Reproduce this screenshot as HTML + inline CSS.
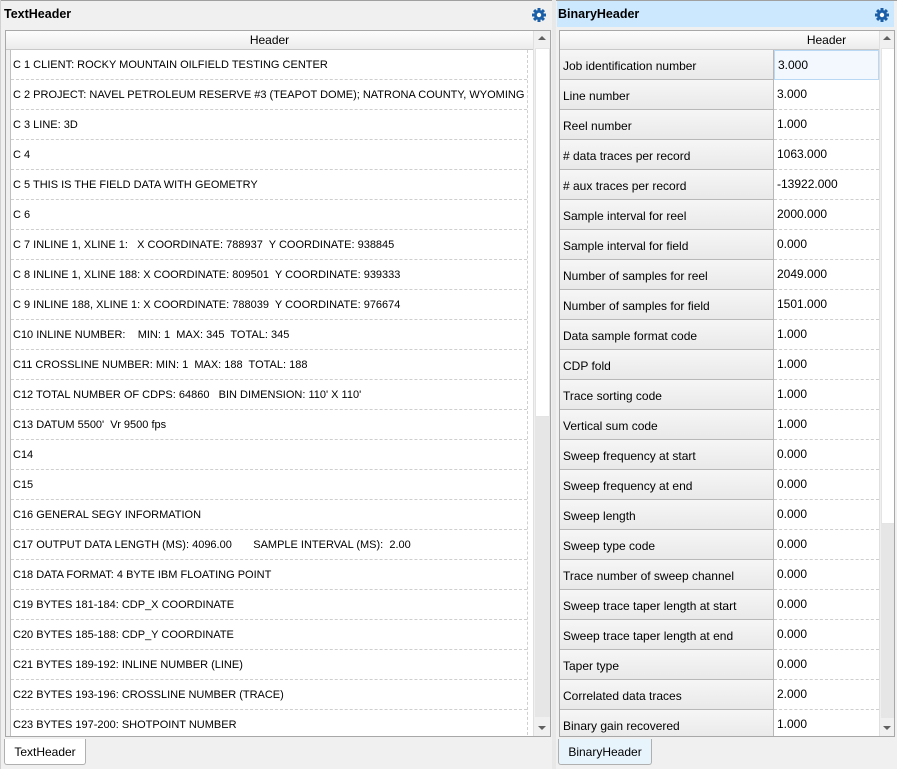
<!DOCTYPE html>
<html><head><style>
*{margin:0;padding:0;box-sizing:border-box}
body{width:897px;height:769px;background:#f0f0f0;font-family:"Liberation Sans",sans-serif;font-size:12px;color:#000;position:relative;overflow:hidden}
.abs{position:absolute}
.title{font-weight:bold;font-size:12.5px}
.gear{width:16px;height:16px}
.row{position:absolute;left:0;height:30px;border-bottom:1px dashed #cfcfcf;white-space:nowrap}
.hdr{background:linear-gradient(#fdfdfd,#ececec);border-bottom:1px solid #c8c8c8;text-align:center;line-height:18px}
.rh{background:linear-gradient(#f6f6f6,#e9e9e9);border-right:1px solid #b8b8b8;border-bottom:1px solid #b8b8b8}
</style></head><body>
<div class="abs" style="left:0;top:0;width:897px;height:1px;background:#a0a0a0"></div>
<div class="abs" style="left:0;top:0;width:1px;height:769px;background:#d0d0d0"></div>
<div class="abs title" style="left:4px;top:7px">TextHeader</div>
<svg class="abs gear" style="left:531px;top:7px" viewBox="0 0 16 16"><g fill="#1a5fa8"><circle cx="8" cy="8" r="5"/><rect x="6.5" y="1" width="3" height="14"/><rect x="1" y="6.5" width="14" height="3"/><rect x="6.5" y="1" width="3" height="14" transform="rotate(45 8 8)"/><rect x="6.5" y="1" width="3" height="14" transform="rotate(-45 8 8)"/></g><circle cx="8" cy="8" r="2.2" fill="#fff"/></svg>
<div class="abs" style="left:5px;top:30px;width:546px;height:707px;border:1px solid #a8a8a8;background:#fff;overflow:hidden">
 <div class="abs hdr" style="left:0;top:0;width:527px;height:19px">Header</div>
 <div class="abs" style="left:0;top:19px;width:5px;height:700px;background:#f0f0f0;border-right:1px solid #c0c0c0"></div>
 <div class="abs" style="left:5px;top:19px;width:516px;font-size:11px" id="L"></div>
 <div class="abs" style="left:521px;top:19px;width:1px;height:700px;border-left:1px dashed #cfcfcf"></div>
 <div class="abs" style="left:527px;top:0;width:17px;height:707px;background:#f0f0f0;border-left:1px solid #e0e0e0">
  <div class="abs" style="left:1px;top:17px;width:15px;height:369px;background:#fff;border:1px solid #e4e4e4"></div>
  <div class="abs" style="left:1px;top:386px;width:15px;height:300px;background:#e6e6e6"></div>
  <div class="abs" style="left:4px;top:5px;width:0;height:0;border-left:4px solid transparent;border-right:4px solid transparent;border-bottom:4px solid #606060"></div>
  <div class="abs" style="left:4px;top:695px;width:0;height:0;border-left:4px solid transparent;border-right:4px solid transparent;border-top:4px solid #606060"></div>
 </div>
</div>
<div class="abs" style="left:4px;top:739px;width:82px;height:26px;background:#fff;border:1px solid #b0b0b0;border-top:none;border-radius:0 0 3px 3px;text-align:center;line-height:26px">TextHeader</div>
<div class="abs" style="left:552px;top:0;width:4px;height:769px;background:#e8e8e8"></div>
<div class="abs" style="left:557px;top:1px;width:337px;height:26px;background:#cce8ff"></div>
<div class="abs title" style="left:558px;top:7px">BinaryHeader</div>
<svg class="abs gear" style="left:874px;top:7px" viewBox="0 0 16 16"><g fill="#1a5fa8"><circle cx="8" cy="8" r="5"/><rect x="6.5" y="1" width="3" height="14"/><rect x="1" y="6.5" width="14" height="3"/><rect x="6.5" y="1" width="3" height="14" transform="rotate(45 8 8)"/><rect x="6.5" y="1" width="3" height="14" transform="rotate(-45 8 8)"/></g><circle cx="8" cy="8" r="2.2" fill="#fff"/></svg>
<div class="abs" style="left:559px;top:30px;width:336px;height:707px;border:1px solid #a8a8a8;background:#fff;overflow:hidden">
 <div class="abs hdr" style="left:0;top:0;width:319px;height:19px;padding-left:214px">Header</div>
 <div class="abs" style="left:0;top:19px;width:319px" id="R"></div>
 <div class="abs" style="left:319px;top:0;width:16px;height:707px;background:#f0f0f0;border-left:1px solid #e0e0e0">
  <div class="abs" style="left:1px;top:17px;width:14px;height:476px;background:#fff;border:1px solid #e4e4e4"></div>
  <div class="abs" style="left:1px;top:493px;width:14px;height:194px;background:#e6e6e6"></div>
  <div class="abs" style="left:3px;top:5px;width:0;height:0;border-left:4px solid transparent;border-right:4px solid transparent;border-bottom:4px solid #606060"></div>
  <div class="abs" style="left:3px;top:695px;width:0;height:0;border-left:4px solid transparent;border-right:4px solid transparent;border-top:4px solid #606060"></div>
 </div>
</div>
<div class="abs" style="left:558px;top:739px;width:94px;height:26px;background:#e8f4fc;border:1px solid #b0b0b0;border-top:none;border-radius:0 0 3px 3px;text-align:center;line-height:26px">BinaryHeader</div>
<script>
var L=["C 1 CLIENT: ROCKY MOUNTAIN OILFIELD TESTING CENTER","C 2 PROJECT: NAVEL PETROLEUM RESERVE #3 (TEAPOT DOME); NATRONA COUNTY, WYOMING","C 3 LINE: 3D","C 4","C 5 THIS IS THE FIELD DATA WITH GEOMETRY","C 6","C 7 INLINE 1, XLINE 1:&nbsp;&nbsp; X COORDINATE: 788937&nbsp; Y COORDINATE: 938845","C 8 INLINE 1, XLINE 188: X COORDINATE: 809501&nbsp; Y COORDINATE: 939333","C 9 INLINE 188, XLINE 1: X COORDINATE: 788039&nbsp; Y COORDINATE: 976674","C10 INLINE NUMBER:&nbsp;&nbsp;&nbsp; MIN: 1&nbsp; MAX: 345&nbsp; TOTAL: 345","C11 CROSSLINE NUMBER: MIN: 1&nbsp; MAX: 188&nbsp; TOTAL: 188","C12 TOTAL NUMBER OF CDPS: 64860&nbsp;&nbsp; BIN DIMENSION: 110' X 110'","C13 DATUM 5500'&nbsp; Vr 9500 fps","C14","C15","C16 GENERAL SEGY INFORMATION","C17 OUTPUT DATA LENGTH (MS): 4096.00&nbsp;&nbsp;&nbsp;&nbsp;&nbsp;&nbsp; SAMPLE INTERVAL (MS):&nbsp; 2.00","C18 DATA FORMAT: 4 BYTE IBM FLOATING POINT","C19 BYTES 181-184: CDP_X COORDINATE","C20 BYTES 185-188: CDP_Y COORDINATE","C21 BYTES 189-192: INLINE NUMBER (LINE)","C22 BYTES 193-196: CROSSLINE NUMBER (TRACE)","C23 BYTES 197-200: SHOTPOINT NUMBER"];
var R=[["Job identification number","3.000"],["Line number","3.000"],["Reel number","1.000"],["# data traces per record","1063.000"],["# aux traces per record","-13922.000"],["Sample interval for reel","2000.000"],["Sample interval for field","0.000"],["Number of samples for reel","2049.000"],["Number of samples for field","1501.000"],["Data sample format code","1.000"],["CDP fold","1.000"],["Trace sorting code","1.000"],["Vertical sum code","1.000"],["Sweep frequency at start","0.000"],["Sweep frequency at end","0.000"],["Sweep length","0.000"],["Sweep type code","0.000"],["Trace number of sweep channel","0.000"],["Sweep trace taper length at start","0.000"],["Sweep trace taper length at end","0.000"],["Taper type","0.000"],["Correlated data traces","2.000"],["Binary gain recovered","1.000"]];
var h="";L.forEach(function(t,i){h+='<div class="row" style="top:'+(i*30)+'px;width:516px;padding-left:2px;padding-top:1px;line-height:29px">'+t+'</div>'});document.getElementById("L").innerHTML=h;
h="";R.forEach(function(r,i){h+='<div class="abs rh" style="left:0;top:'+(i*30)+'px;width:214px;height:30px;padding-left:3px;padding-top:1px;line-height:30px">'+r[0]+'</div><div class="row" style="left:214px;top:'+(i*30)+'px;width:105px;padding-left:3px;line-height:28px'+(i==0?';background:#f2f8fe;border:1px solid #b8d8f4':'')+'">'+r[1]+'</div>'});document.getElementById("R").innerHTML=h;
</script>
</body></html>
